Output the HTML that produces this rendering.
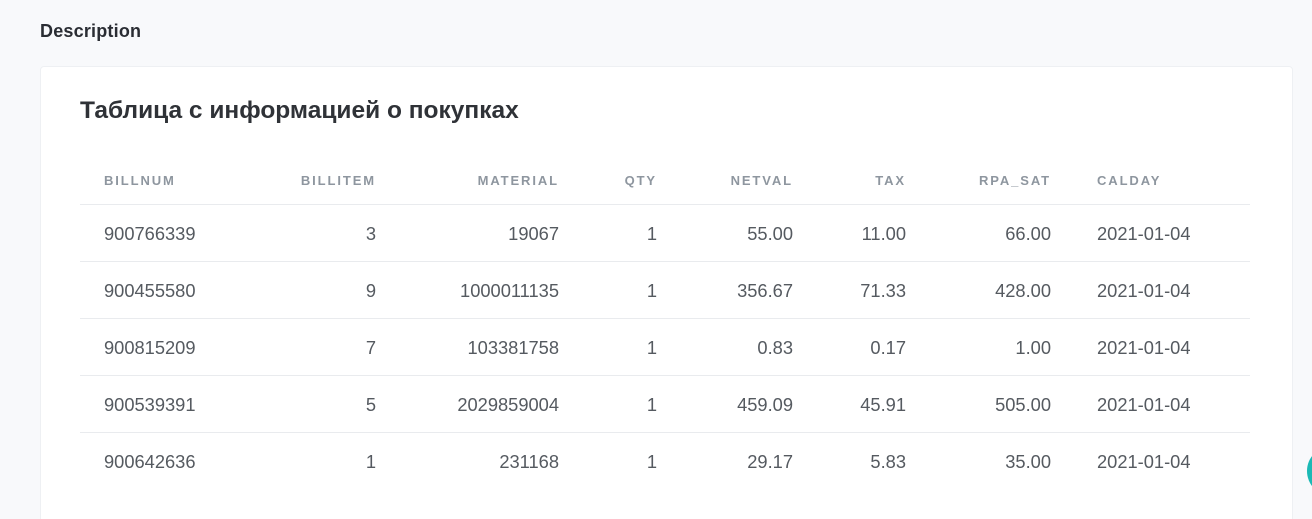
<!DOCTYPE html>
<html><head><meta charset="utf-8"><style>
html{height:519px;overflow:hidden}
body{margin:0;width:1312px;height:519px;background:#f8f9fb;font-family:"Liberation Sans",sans-serif;position:relative;overflow:hidden}
.h{position:absolute;left:40px;top:21px;font-size:18px;font-weight:bold;color:#2a2d33;letter-spacing:0.2px}
.card{position:absolute;left:40px;top:66px;width:1251px;height:470px;background:#fff;border:1px solid #eef0f3;border-radius:4px}
.t{position:absolute;left:80px;top:97px;font-size:24.5px;font-weight:bold;color:#2f3237}
.c{position:absolute;font-size:18.3px;color:#555a60;line-height:20px;white-space:nowrap}
.hd{font-size:13px;letter-spacing:1.9px;color:#8e969f;font-weight:bold}
.r{transform:translateX(-100%)}
.l{position:absolute;left:80px;width:1170px;height:1px;background:#e9ebee}
.dot{position:absolute;left:1307px;top:446px;width:50px;height:50px;border-radius:50%;background:#1bb9b5}
</style></head><body>
<div class="h">Description</div>
<div class="card"></div>
<div class="t">Таблица с информацией о покупках</div>
<div class="l" style="top:204px"></div>
<div class="l" style="top:261px"></div>
<div class="l" style="top:318px"></div>
<div class="l" style="top:375px"></div>
<div class="l" style="top:432px"></div>
<div id="g"></div>
<div class="dot"></div>
<script>
const cols=[[104,0],[376,1],[559,1],[657,1],[793,1],[906,1],[1051,1],[1097,0]];
const hdr=["BILLNUM","BILLITEM","MATERIAL","QTY","NETVAL","TAX","RPA_SAT","CALDAY"];
const rows=[["900766339","3","19067","1","55.00","11.00","66.00","2021-01-04"],
["900455580","9","1000011135","1","356.67","71.33","428.00","2021-01-04"],
["900815209","7","103381758","1","0.83","0.17","1.00","2021-01-04"],
["900539391","5","2029859004","1","459.09","45.91","505.00","2021-01-04"],
["900642636","1","231168","1","29.17","5.83","35.00","2021-01-04"]];
let h="";
hdr.forEach((t,i)=>{h+=`<div class="c hd ${cols[i][1]?'r':''}" style="left:${cols[i][0]}px;top:171px">${t}</div>`});
rows.forEach((r,j)=>r.forEach((t,i)=>{h+=`<div class="c ${cols[i][1]?'r':''}" style="left:${cols[i][0]}px;top:${224+57*j}px">${t}</div>`}));
document.getElementById("g").innerHTML=h;
</script>
</body></html>
